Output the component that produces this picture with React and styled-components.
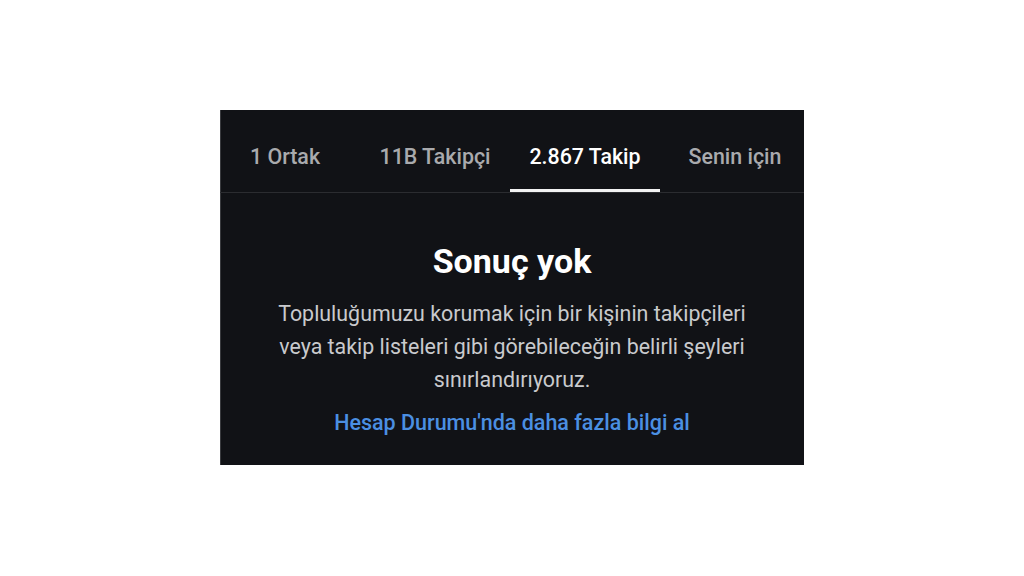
import React from "react";
import styled, { createGlobalStyle } from "styled-components";

const Global = createGlobalStyle`
  html, body { margin: 0; padding: 0; background: #ffffff; }
  body { font-family: Roboto, "Noto Sans", sans-serif; }
`;

const Page = styled.div`
  width: 1024px;
  height: 576px;
  display: flex;
  justify-content: center;
  padding-top: 110px;
  box-sizing: border-box;
`;

const Card = styled.div`
  width: 584px;
  height: 355px;
  background: #111216;
  overflow: hidden;
  display: flex;
  flex-direction: column;
  box-shadow: inset 1px 0 0 #3a3b3f;
`;

const TabBar = styled.div`
  display: flex;
  height: 82px;
  border-bottom: 1px solid #2b2c30;
  margin-left: -10px;
  flex-shrink: 0;
`;

const Tab = styled.div`
  flex: 0 0 150px;
  display: flex;
  align-items: center;
  justify-content: center;
  position: relative;
  font-size: 21.4px;
  font-weight: 500;
  color: ${(p) => (p.$active ? "#ffffff" : "#a9aaad")};
  padding-top: 11px;
  box-sizing: border-box;
  white-space: nowrap;

  &::after {
    content: "";
    display: ${(p) => (p.$active ? "block" : "none")};
    position: absolute;
    left: 0;
    right: 0;
    bottom: 0;
    height: 3px;
    background: #f2f2f2;
  }
`;

const Body = styled.div`
  display: flex;
  flex-direction: column;
  align-items: center;
  padding-top: 48px;
  text-align: center;
`;

const Title = styled.h2`
  margin: 0;
  font-size: 34px;
  font-weight: 700;
  color: #ffffff;
  line-height: 40px;
`;

const Text = styled.p`
  margin: 16px 0 0;
  font-size: 21.4px;
  line-height: 33px;
  color: #c9cacd;
  width: 500px;
`;

const Link = styled.a`
  margin-top: 13px;
  font-size: 21.5px;
  font-weight: 500;
  color: #4b8fe2;
  text-decoration: none;
  line-height: 28px;
`;

export default function App() {
  return (
    <>
      <Global />
      <Page>
        <Card>
          <TabBar>
            <Tab>1 Ortak</Tab>
            <Tab>11B Takipçi</Tab>
            <Tab $active>2.867 Takip</Tab>
            <Tab>Senin için</Tab>
          </TabBar>
          <Body>
            <Title>Sonuç yok</Title>
            <Text>
              Topluluğumuzu korumak için bir kişinin takipçileri veya takip
              listeleri gibi görebileceğin belirli şeyleri sınırlandırıyoruz.
            </Text>
            <Link>Hesap Durumu'nda daha fazla bilgi al</Link>
          </Body>
        </Card>
      </Page>
    </>
  );
}
